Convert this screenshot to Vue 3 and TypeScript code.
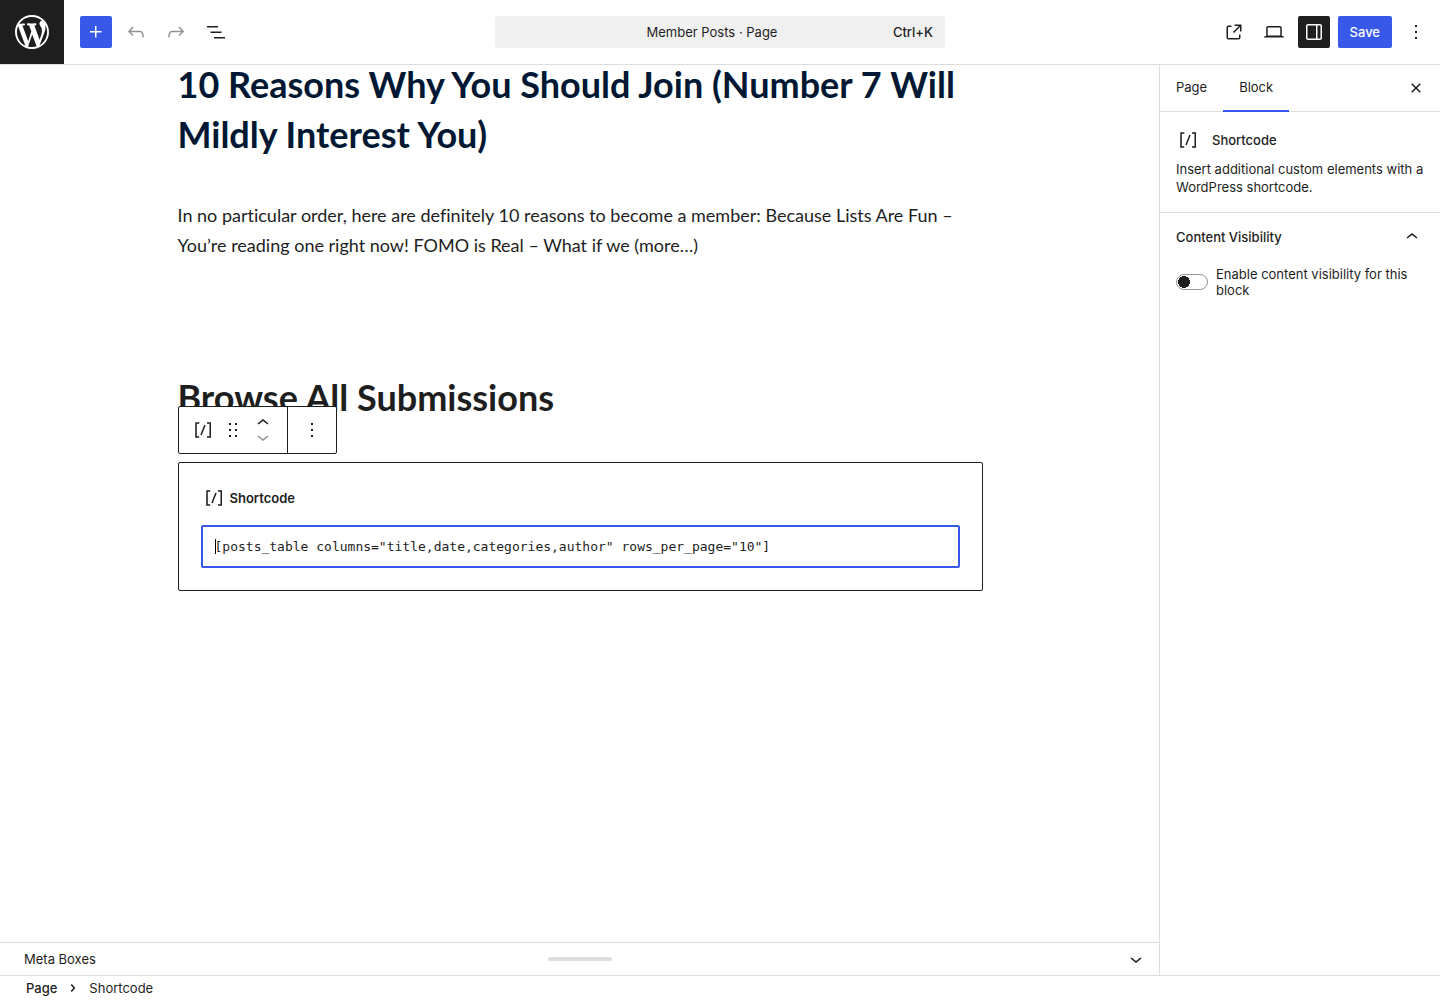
<script setup lang="ts">
import { ref } from 'vue'

const icons = {
  wordpress:
    'M20 10c0-5.51-4.49-10-10-10C4.48 0 0 4.49 0 10c0 5.52 4.48 10 10 10 5.51 0 10-4.48 10-10zM7.78 15.37L4.37 6.22c.55-.02 1.17-.08 1.17-.08.5-.06.44-1.13-.06-1.11 0 0-1.45.11-2.37.11-.18 0-.37 0-.58-.01C4.12 2.69 6.87 1.11 10 1.11c2.33 0 4.45.87 6.05 2.34-.68-.11-1.65.39-1.65 1.58 0 .74.45 1.36.9 2.1.35.61.55 1.36.55 2.46 0 1.49-1.4 5-1.4 5l-3.03-8.37c.54-.02.82-.17.82-.17.5-.05.44-1.25-.06-1.22 0 0-1.44.12-2.38.12-.87 0-2.33-.12-2.33-.12-.5-.03-.56 1.2-.06 1.22l.92.08 1.26 3.41zM17.41 10c.24-.64.74-1.87.43-4.25.7 1.29 1.05 2.71 1.05 4.25 0 3.29-1.73 6.24-4.4 7.78.97-2.59 1.94-5.2 2.92-7.78zM6.1 18.09C3.12 16.65 1.11 13.53 1.11 10c0-1.3.23-2.48.72-3.59C3.25 10.3 4.67 14.2 6.1 18.09zm4.03-6.63l2.58 6.98c-.86.29-1.76.45-2.71.45-.79 0-1.57-.11-2.29-.33.81-2.38 1.62-4.74 2.42-7.1z',
  plus: 'M11 12.5V17.5H12.5V12.5H17.5V11H12.5V6H11V11H6V12.5H11Z',
  undo: 'M18.3 11.7c-.6-.6-1.4-.9-2.3-.9H6.7l2.9-3.3-1.1-1-4.5 5L8.5 16l1-1-2.7-2.7H16c.5 0 .9.2 1.3.5 1 1 1 3.4 1 4.5v.3h1.5v-.2c0-1.5 0-4.3-1.5-5.7z',
  redo: 'M15.6 6.5l-1.1 1 2.9 3.3H8c-.9 0-1.7.3-2.3.9-1.4 1.5-1.4 4.2-1.4 5.6v.2h1.5v-.3c0-1.1 0-3.5 1-4.5.3-.3.7-.5 1.3-.5h9.2L14.5 15l1.1 1.1 4.6-4.6-4.6-5z',
  listView: 'M3 6h11v1.5H3V6Zm3.5 5.5h11V13h-11v-1.5ZM21 17H10v1.5h11V17Z',
  external:
    'M19.5 4.5h-7V6h4.44l-5.97 5.97 1.06 1.06L18 7.06v4.44h1.5v-7Zm-13 1a2 2 0 0 0-2 2v10a2 2 0 0 0 2 2h10a2 2 0 0 0 2-2v-3H17v3a.5.5 0 0 1-.5.5h-10a.5.5 0 0 1-.5-.5v-10a.5.5 0 0 1 .5-.5h3V5.5h-3Z',
  desktop:
    'M20.5 16h-.7V8c0-1.1-.9-2-2-2H6.2c-1.1 0-2 .9-2 2v8h-.7c-.8 0-1.5.7-1.5 1.5h20c0-.8-.7-1.5-1.5-1.5zM5.7 8c0-.3.2-.5.5-.5h11.6c.3 0 .5.2.5.5v7.6H5.7V8z',
  drawer:
    'M18 4H6c-1.1 0-2 .9-2 2v12c0 1.1.9 2 2 2h12c1.1 0 2-.9 2-2V6c0-1.1-.9-2-2-2zm-4 14.5H6c-.3 0-.5-.2-.5-.5V6c0-.3.2-.5.5-.5h8v13zm4.5-.5c0 .3-.2.5-.5.5h-2.5v-13H18c.3 0 .5.2.5.5v12z',
  more: 'M13 19h-2v-2h2v2zm0-6h-2v-2h2v2zm0-6h-2V5h2v2z',
  close:
    'M12 13.06l3.712 3.713 1.061-1.06L13.061 12l3.712-3.712-1.06-1.06L12 10.938 8.288 7.227l-1.061 1.06L10.939 12l-3.712 3.712 1.06 1.061L12 13.061z',
  shortcode:
    'M16 4.2v1.5h2.5v12.5H16v1.5h4V4.2h-4zM4.2 19.8h4v-1.5H5.8V5.8h2.5V4.2h-4l-.1 15.6zm5.1-3.1l1.4.6 4-10-1.4-.6-4 10z',
  drag: 'M8 7h2V5H8v2zm0 6h2v-2H8v2zm0 6h2v-2H8v2zm6-14v2h2V5h-2zm0 8h2v-2h-2v2zm0 6h2v-2h-2v2z',
  up: 'M6.5 12.4L12 8l5.5 4.4-.9 1.2L12 10l-4.5 3.6-1-1.2z',
  down: 'M17.5 11.6L12 16l-5.5-4.4.9-1.2L12 14l4.5-3.6 1 1.2z',
  right:
    'M10.8622 8.04053L14.2805 12.0286L10.8622 16.0167L9.72327 15.0405L12.3049 12.0286L9.72327 9.01672L10.8622 8.04053Z',
}

const shortcode = ref('[posts_table columns="title,date,categories,author" rows_per_page="10"]')
const visibility = ref(false)
</script>

<template>
  <div class="editor">
    <header class="header">
      <a class="logo" href="#" aria-label="View Pages">
        <svg viewBox="0 0 20 20" width="34" height="34"><path :d="icons.wordpress" /></svg>
      </a>
      <div class="tools">
        <button class="icon-btn primary" aria-label="Block Inserter"><svg class="icon" viewBox="0 0 24 24"><path :d="icons.plus" /></svg></button>
        <button class="icon-btn muted" aria-label="Undo" aria-disabled="true"><svg class="icon" viewBox="0 0 24 24"><path :d="icons.undo" /></svg></button>
        <button class="icon-btn muted" aria-label="Redo" aria-disabled="true"><svg class="icon" viewBox="0 0 24 24"><path :d="icons.redo" /></svg></button>
        <button class="icon-btn" aria-label="Document Overview"><svg class="icon" viewBox="0 0 24 24"><path :d="icons.listView" /></svg></button>
      </div>
      <button class="command">
        <span class="command-title">Member Posts · Page</span>
        <span class="command-key">Ctrl+K</span>
      </button>
      <div class="settings">
        <a class="icon-btn" href="#" aria-label="View Page"><svg class="icon" viewBox="0 0 24 24"><path :d="icons.external" /></svg></a>
        <button class="icon-btn" aria-label="View"><svg class="icon" viewBox="0 0 24 24"><path :d="icons.desktop" /></svg></button>
        <button class="icon-btn pressed" aria-label="Settings" aria-pressed="true"><svg class="icon" viewBox="0 0 24 24"><path fill-rule="evenodd" :d="icons.drawer" /></svg></button>
        <button class="save">Save</button>
        <button class="icon-btn" aria-label="Options"><svg class="icon" viewBox="0 0 24 24"><path :d="icons.more" /></svg></button>
      </div>
    </header>

    <div class="body">
      <div class="main">
        <main class="canvas">
          <div class="content">
            <h2 class="post-title">10 Reasons Why You Should Join (Number 7 Will Mildly Interest You)</h2>
            <p class="excerpt">In no particular order, here are definitely 10 reasons to become a member: Because Lists Are Fun – You’re reading one right now! FOMO is Real – What if we (more…)</p>
            <h2 class="section-title">Browse All Submissions</h2>
            <section class="block">
              <div class="toolbar" role="toolbar" aria-label="Block tools">
                <div class="group">
                  <button class="tool" aria-label="Shortcode"><svg class="icon" viewBox="0 0 24 24"><path :d="icons.shortcode" /></svg></button>
                  <button class="tool" aria-label="Drag"><svg class="icon" viewBox="0 0 24 24"><path :d="icons.drag" /></svg></button>
                  <div class="movers">
                    <button class="mover" aria-label="Move up"><svg class="icon" viewBox="0 0 24 24"><path :d="icons.up" /></svg></button>
                    <button class="mover muted" aria-label="Move down" aria-disabled="true"><svg class="icon" viewBox="0 0 24 24"><path :d="icons.down" /></svg></button>
                  </div>
                </div>
                <div class="group options">
                  <button class="tool" aria-label="Options"><svg class="icon" viewBox="0 0 24 24"><path :d="icons.more" /></svg></button>
                </div>
              </div>
              <label class="block-label" for="shortcode-input">
                <svg class="icon" viewBox="0 0 24 24"><path :d="icons.shortcode" /></svg>Shortcode
              </label>
              <div class="field">
                <textarea id="shortcode-input" v-model="shortcode" class="input" rows="1" spellcheck="false"></textarea>
                <span class="caret" aria-hidden="true"></span>
              </div>
            </section>
          </div>
        </main>
        <div class="meta">
          <span class="meta-label">Meta Boxes</span>
          <span class="handle" role="separator" aria-label="Drag to resize"></span>
          <button class="meta-toggle" aria-label="Expand meta boxes"><svg class="icon" viewBox="0 0 24 24"><path :d="icons.down" /></svg></button>
        </div>
      </div>

      <aside class="sidebar">
        <div class="tabs" role="tablist">
          <button class="tab" role="tab" aria-selected="false">Page</button>
          <button class="tab active" role="tab" aria-selected="true">Block</button>
          <button class="icon-btn close" aria-label="Close Settings"><svg class="icon" viewBox="0 0 24 24"><path :d="icons.close" /></svg></button>
        </div>
        <div class="card">
          <h2 class="card-title"><svg class="icon" viewBox="0 0 24 24"><path :d="icons.shortcode" /></svg>Shortcode</h2>
          <p class="card-text">Insert additional custom elements with a WordPress shortcode.</p>
        </div>
        <div class="panel">
          <button class="panel-toggle" aria-expanded="true">Content Visibility<svg class="icon" viewBox="0 0 24 24"><path :d="icons.up" /></svg></button>
          <div class="toggle-row">
            <input id="visibility" v-model="visibility" class="switch" type="checkbox" />
            <label for="visibility">Enable content visibility for this block</label>
          </div>
        </div>
      </aside>
    </div>

    <footer class="footer">
      <a class="crumb" href="#">Page</a>
      <svg class="icon" viewBox="0 0 24 24"><path :d="icons.right" /></svg>
      <span>Shortcode</span>
    </footer>
  </div>
</template>

<style>
body {
  margin: 0;
}
</style>

<style scoped>
.editor,
.editor * {
  box-sizing: border-box;
}
.editor {
  display: flex;
  flex-direction: column;
  min-height: 100vh;
  background: #fff;
  color: #1e1e1e;
  font-family: Inter, sans-serif;
  font-size: 13px;
  line-height: 18px;
}
button {
  padding: 0;
  border: 0;
  background: none;
  color: inherit;
  font: inherit;
  cursor: pointer;
}
a {
  color: inherit;
  text-decoration: none;
}
.icon {
  display: block;
  flex: none;
  width: 24px;
  height: 24px;
  fill: currentColor;
}
.header {
  display: grid;
  grid-template-columns: 64px 1fr 450px calc(50% - 225px);
  align-items: center;
  border-bottom: 1px solid #ddd;
}
.logo {
  display: flex;
  align-items: center;
  justify-content: center;
  height: 64px;
  background: #1e1e1e;
  fill: #fff;
}
.tools {
  display: flex;
  gap: 8px;
  padding-left: 16px;
}
.icon-btn {
  display: flex;
  align-items: center;
  justify-content: center;
  width: 32px;
  height: 32px;
  border-radius: 2px;
}
.primary {
  background: #3858e9;
  color: #fff;
}
.pressed {
  background: #1e1e1e;
  color: #fff;
}
.muted {
  color: #949494;
}
.command {
  display: grid;
  grid-template-columns: 1fr auto 1fr;
  align-items: center;
  height: 32px;
  padding: 0 12px;
  border-radius: 4px;
  background: #f0f0f0;
}
.command-title {
  grid-column: 2;
  padding-right: 16px;
}
.command-key {
  justify-self: end;
  font-weight: 500;
}
.settings {
  display: flex;
  justify-content: flex-end;
  gap: 8px;
  padding-right: 8px;
}
.save {
  height: 32px;
  padding: 0 12px;
  border-radius: 2px;
  background: #3858e9;
  color: #fff;
  font-weight: 500;
}
.body {
  display: flex;
  flex: 1;
}
.main {
  display: flex;
  flex: 1;
  flex-direction: column;
  min-width: 0;
}
.canvas {
  flex: 1;
  overflow: hidden;
}
.content {
  max-width: 805px;
  margin: -6px auto 0;
  font-family: Lato, sans-serif;
}
.post-title,
.section-title {
  margin: 0;
  font-size: 36px;
  font-weight: 700;
  line-height: 50px;
}
.post-title {
  color: #001833;
}
.excerpt {
  margin: 41px 0 112px;
  font-size: 18px;
  line-height: 30px;
  font-variant-ligatures: none;
}
.block {
  position: relative;
  margin-top: 40px;
  padding: 22px;
  border: 1px solid #1e1e1e;
  border-radius: 2px;
  font-family: Inter, sans-serif;
}
.toolbar {
  position: absolute;
  bottom: calc(100% + 9px);
  left: -1px;
  display: flex;
  border: 1px solid #1e1e1e;
  border-radius: 2px;
  background: #fff;
}
.group {
  display: flex;
  align-items: center;
  height: 46px;
  padding: 0 10px;
}
.options {
  padding: 0 12px;
  border-left: 1px solid #1e1e1e;
}
.tool {
  display: flex;
  justify-content: center;
  width: 28px;
}
.group .tool + .tool {
  width: 32px;
}
.options .tool {
  width: 24px;
}
.movers {
  display: flex;
  flex-direction: column;
  width: 28px;
}
.mover {
  display: flex;
  align-items: center;
  justify-content: center;
  height: 14px;
}
.block-label {
  display: flex;
  align-items: center;
  gap: 4px;
  height: 26px;
  padding-left: 1px;
  font-weight: 600;
}
.field {
  position: relative;
  margin-top: 14px;
}
.input {
  display: block;
  width: 100%;
  height: 43px;
  padding: 11px 12px 10px;
  overflow: hidden;
  border: 2px solid #3858e9;
  border-radius: 2px;
  outline: 0;
  background: #fff;
  color: #1e1e1e;
  font-family: 'DejaVu Sans Mono', monospace;
  font-size: 13px;
  line-height: 18px;
  resize: none;
}
.caret {
  position: absolute;
  top: 14px;
  left: 14px;
  width: 1px;
  height: 15px;
  background: #000;
}
.meta {
  display: grid;
  grid-template-columns: 1fr auto 1fr;
  align-items: center;
  height: 33px;
  padding: 0 12px;
  border-top: 1px solid #ddd;
}
.meta-label {
  padding-left: 12px;
}
.handle {
  width: 64px;
  height: 4px;
  border-radius: 2px;
  background: #ddd;
}
.meta-toggle {
  justify-self: end;
}
.sidebar {
  flex: none;
  width: 280px;
  box-shadow: -1px 0 #ddd;
}
.tabs {
  display: flex;
  align-items: center;
  height: 47px;
  border-bottom: 1px solid #ddd;
}
.tab {
  height: 47px;
  padding: 0 16px 2px;
}
.active {
  box-shadow: inset 0 -2px #3858e9;
}
.close {
  margin: 0 8px 0 auto;
}
.card {
  padding: 16px;
  border-bottom: 1px solid #ddd;
}
.card-title {
  display: flex;
  align-items: center;
  gap: 12px;
  margin: 0 0 8px;
  font-size: 13px;
  font-weight: 500;
}
.card-text {
  margin: 0;
}
.panel {
  padding: 0 16px;
}
.panel-toggle {
  display: flex;
  align-items: center;
  justify-content: space-between;
  width: 100%;
  height: 48px;
  font-weight: 500;
}
.toggle-row {
  display: flex;
  align-items: center;
  gap: 8px;
  padding: 5px 0;
  line-height: 16px;
}
.switch {
  flex: none;
  width: 32px;
  height: 16px;
  margin: 0;
  border: 1px solid #949494;
  border-radius: 8px;
  appearance: none;
  background: radial-gradient(circle at 7px 7px, #1e1e1e 6px, transparent 6px);
}
.footer {
  display: flex;
  align-items: center;
  height: 25px;
  padding: 0 26px;
  border-top: 1px solid #ddd;
}
.footer .icon {
  margin: 0 4px;
}
.crumb {
  font-weight: 500;
}
</style>
